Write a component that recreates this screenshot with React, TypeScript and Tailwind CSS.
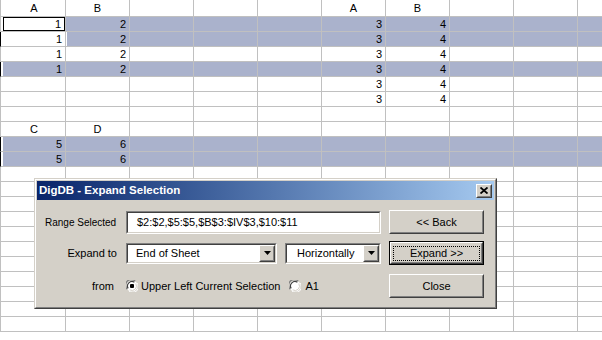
import React from "react";

type Row = { vals?: Record<number, string>; hdr?: boolean; hlFrom?: number; tick?: boolean };

const rows: Row[] = [
  { vals: { 0: "A", 1: "B", 5: "A", 6: "B" }, hdr: true },
  { vals: { 0: "1", 1: "2", 5: "3", 6: "4" }, hlFrom: 1 },
  { vals: { 0: "1", 1: "2", 5: "3", 6: "4" }, hlFrom: 1, tick: true },
  { vals: { 0: "1", 1: "2", 5: "3", 6: "4" } },
  { vals: { 0: "1", 1: "2", 5: "3", 6: "4" }, hlFrom: 0, tick: true },
  { vals: { 5: "3", 6: "4" } },
  { vals: { 5: "3", 6: "4" } },
  {},
  { vals: { 0: "C", 1: "D" }, hdr: true },
  { vals: { 0: "5", 1: "6" }, hlFrom: 0, tick: true },
  { vals: { 0: "5", 1: "6" }, hlFrom: 0, tick: true },
  ...Array.from({ length: 11 }, () => ({})),
];

const cols = Array.from({ length: 10 }, (_, i) => i);

const Sheet = () => (
  <div className="flex flex-col font-['Liberation_Sans',Arial,sans-serif] text-[11px] text-black">
    {rows.map((r, ri) => (
      <div key={ri} className={`flex shrink-0 ${ri === 0 ? "h-[17px]" : "h-[15px]"}`}>
        {cols.map((c) => {
          const v = r.vals?.[c];
          const hl = r.hlFrom !== undefined && c >= r.hlFrom;
          const active = ri === 1 && c === 0;
          return (
            <div
              key={c}
              className={`shrink-0 border-b border-r border-[#c0c0c0] ${
                c === 0 ? `w-[66px] border-l ${r.tick ? "border-l-black" : ""}` : "w-[64px]"
              }`}
            >
              <div
                className={`flex h-full items-center ${c === 0 ? "ml-[2px]" : ""} ${
                  ri === 2 && c === 1 ? "ml-[1px]" : ""
                } ${hl ? "bg-[#aab2cc]" : ""} ${active ? "border border-black" : ""} ${
                  r.hdr ? "justify-center" : "justify-end pr-[3px]"
                }`}
              >
                {v}
              </div>
            </div>
          );
        })}
      </div>
    ))}
  </div>
);

const Raised = ({ children, className = "" }: { children?: React.ReactNode; className?: string }) => (
  <div className={`border border-t-white border-l-white border-r-[#404040] border-b-[#404040] ${className}`}>
    <div className="flex h-full w-full items-center justify-center border border-t-[#d4d0c8] border-l-[#d4d0c8] border-r-[#808080] border-b-[#808080] bg-[#d4d0c8]">
      {children}
    </div>
  </div>
);

const Sunken = ({ children, className = "" }: { children?: React.ReactNode; className?: string }) => (
  <div className={`border border-t-[#808080] border-l-[#808080] border-r-white border-b-white ${className}`}>
    <div className="flex h-full w-full items-center border border-t-[#404040] border-l-[#404040] border-r-[#d4d0c8] border-b-[#d4d0c8] bg-white">
      {children}
    </div>
  </div>
);

const Select = ({ text, className, pad }: { text: string; className: string; pad: string }) => (
  <Sunken className={className}>
    <span className={`flex-1 ${pad}`}>{text}</span>
    <Raised className="h-full w-[16px]">
      <svg width="7" height="4" viewBox="0 0 7 4">
        <path d="M0 0h7L3.5 4z" fill="#000" />
      </svg>
    </Raised>
  </Sunken>
);

// classic sunken radio button
const Radio = ({ on }: { on?: boolean }) => (
  <svg width="12" height="12" viewBox="0 0 12 12" className="shrink-0">
    <circle cx="6" cy="6" r="5.5" fill="#fff" />
    <path d="M1.2 9.2A5.5 5.5 0 0 1 9.2 1.2" stroke="#808080" strokeWidth="1.2" fill="none" />
    <path d="M2.2 8.4A4.5 4.5 0 0 1 8.4 2.2" stroke="#404040" strokeWidth="1.2" fill="none" />
    <path d="M10.8 2.8A5.5 5.5 0 0 1 2.8 10.8" stroke="#fff" fill="none" />
    <path d="M9.8 3.6A4.5 4.5 0 0 1 3.6 9.8" stroke="#d4d0c8" fill="none" />
    {on && <rect x="4" y="4" width="4" height="4" rx="1" fill="#000" />}
  </svg>
);

const Dialog = () => (
  <div className="absolute left-[34px] top-[178px] h-[131px] w-[463px] border border-t-[#d4d0c8] border-l-[#d4d0c8] border-r-[#404040] border-b-[#404040] font-['Liberation_Sans',Arial,sans-serif] text-[11px] text-black">
    <div className="flex h-full flex-col border border-t-white border-l-white border-r-[#808080] border-b-[#808080] bg-[#d4d0c8] p-[1px]">
      <div className="flex h-[19px] shrink-0 items-center justify-between bg-gradient-to-r from-[#0a246a] to-[#a6caf0] pl-[2px] pr-[2px]">
        <span className="text-[11.5px] font-bold text-white">DigDB - Expand Selection</span>
        <Raised className="h-[14px] w-[16px]">
          <svg width="8" height="7" viewBox="0 0 8 7">
            <path d="M0.5 0.5l7 6M7.5 0.5l-7 6" stroke="#000" strokeWidth="1.8" />
          </svg>
        </Raised>
      </div>

      <div className="flex flex-col pt-[10px]">
        <div className="flex h-[24px] items-center">
          <div className="w-[89px] pl-[8px] text-[10px]">Range Selected</div>
          <Sunken className="h-[23px] w-[255px]">
            <span className="pl-[9px] text-[11px]">$2:$2,$5:$5,$B$3:$IV$3,$10:$11</span>
          </Sunken>
          <Raised className="ml-[8px] h-[24px] w-[95px]">&lt;&lt; Back</Raised>
        </div>

        <div className="mt-[7px] flex h-[24px] items-center">
          <div className="w-[89px] pr-[9px] text-right">Expand to</div>
          <div className="flex w-[255px] gap-[8px]">
            <Select text="End of Sheet" className="h-[21px] w-[151px]" pad="pl-[8px]" />
            <Select text="Horizontally" className="h-[21px] w-[96px]" pad="pl-[10px]" />
          </div>
          <div className="ml-[8px] h-[24px] w-[95px] border border-black">
            <Raised className="h-full w-full">
              <div className="flex h-[15px] w-[87px] items-center justify-center border border-dotted border-black">
                Expand &gt;&gt;
              </div>
            </Raised>
          </div>
        </div>

        <div className="mt-[9px] flex h-[24px] items-center">
          <div className="w-[89px] pr-[12px] text-right">from</div>
          <div className="flex w-[255px] items-center">
            <Radio on />
            <span className="ml-[3px]">Upper Left Current Selection</span>
            <span className="ml-[9px]">
              <Radio />
            </span>
            <span className="ml-[4px]">A1</span>
          </div>
          <Raised className="ml-[8px] h-[24px] w-[95px]">Close</Raised>
        </div>
      </div>
    </div>
  </div>
);

export default function App() {
  return (
    <div className="relative h-[340px] w-[602px] overflow-hidden bg-white">
      <Sheet />
      <Dialog />
    </div>
  );
}
